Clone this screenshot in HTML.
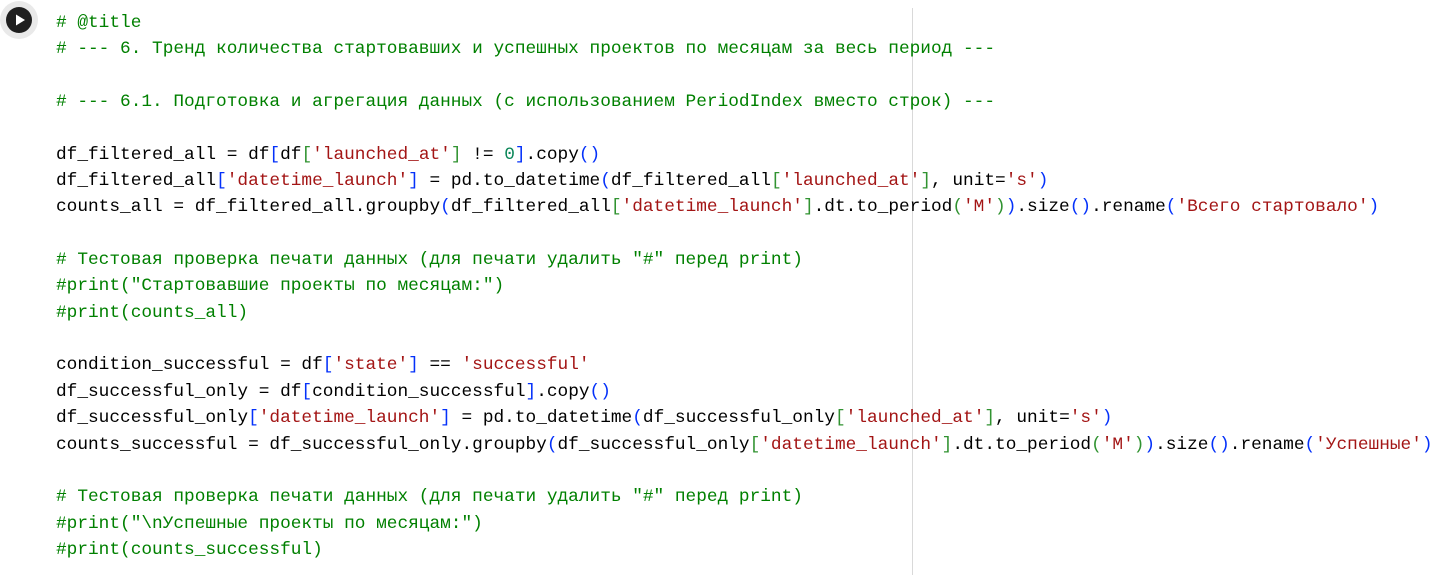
<!DOCTYPE html>
<html><head><meta charset="utf-8"><style>
html,body{margin:0;padding:0;background:#fff;width:1440px;height:575px;overflow:hidden;}
#ruler{position:absolute;left:912px;top:8px;width:1px;height:567px;background:#d9d9d9;}
pre{position:absolute;left:56px;top:10px;margin:0;font-family:"Liberation Mono",monospace;font-size:17.8px;line-height:26.35px;color:#000;}
.c{color:#008000}.s{color:#a31515}.b{color:#0431fa}.g{color:#319331}.n{color:#098658}
#btn{position:absolute;left:0px;top:1px;width:38px;height:38px;border-radius:50%;background:#e9e9e9;}
#btn div{position:absolute;left:6px;top:6px;width:26px;height:26px;border-radius:50%;background:#1f1f1f;}
#btn svg{position:absolute;left:6px;top:6px;}
</style></head><body>
<div id="btn"><div></div><svg width="26" height="26" viewBox="0 0 26 26"><path d="M10 7.5 L19 13 L10 18.5 Z" fill="#fff"/></svg></div>
<div id="ruler"></div>
<pre><span class="c"># @title</span>
<span class="c"># --- 6. Тренд количества стартовавших и успешных проектов по месяцам за весь период ---</span>

<span class="c"># --- 6.1. Подготовка и агрегация данных (с использованием PeriodIndex вместо строк) ---</span>

df_filtered_all = df<span class="b">[</span>df<span class="g">[</span><span class="s">'launched_at'</span><span class="g">]</span> != <span class="n">0</span><span class="b">]</span>.copy<span class="b">()</span>
df_filtered_all<span class="b">[</span><span class="s">'datetime_launch'</span><span class="b">]</span> = pd.to_datetime<span class="b">(</span>df_filtered_all<span class="g">[</span><span class="s">'launched_at'</span><span class="g">]</span>, unit=<span class="s">'s'</span><span class="b">)</span>
counts_all = df_filtered_all.groupby<span class="b">(</span>df_filtered_all<span class="g">[</span><span class="s">'datetime_launch'</span><span class="g">]</span>.dt.to_period<span class="g">(</span><span class="s">'M'</span><span class="g">)</span><span class="b">)</span>.size<span class="b">()</span>.rename<span class="b">(</span><span class="s">'Всего стартовало'</span><span class="b">)</span>

<span class="c"># Тестовая проверка печати данных (для печати удалить "#" перед print)</span>
<span class="c">#print("Стартовавшие проекты по месяцам:")</span>
<span class="c">#print(counts_all)</span>

condition_successful = df<span class="b">[</span><span class="s">'state'</span><span class="b">]</span> == <span class="s">'successful'</span>
df_successful_only = df<span class="b">[</span>condition_successful<span class="b">]</span>.copy<span class="b">()</span>
df_successful_only<span class="b">[</span><span class="s">'datetime_launch'</span><span class="b">]</span> = pd.to_datetime<span class="b">(</span>df_successful_only<span class="g">[</span><span class="s">'launched_at'</span><span class="g">]</span>, unit=<span class="s">'s'</span><span class="b">)</span>
counts_successful = df_successful_only.groupby<span class="b">(</span>df_successful_only<span class="g">[</span><span class="s">'datetime_launch'</span><span class="g">]</span>.dt.to_period<span class="g">(</span><span class="s">'M'</span><span class="g">)</span><span class="b">)</span>.size<span class="b">()</span>.rename<span class="b">(</span><span class="s">'Успешные'</span><span class="b">)</span>

<span class="c"># Тестовая проверка печати данных (для печати удалить "#" перед print)</span>
<span class="c">#print("\nУспешные проекты по месяцам:")</span>
<span class="c">#print(counts_successful)</span>
</pre>
</body></html>
